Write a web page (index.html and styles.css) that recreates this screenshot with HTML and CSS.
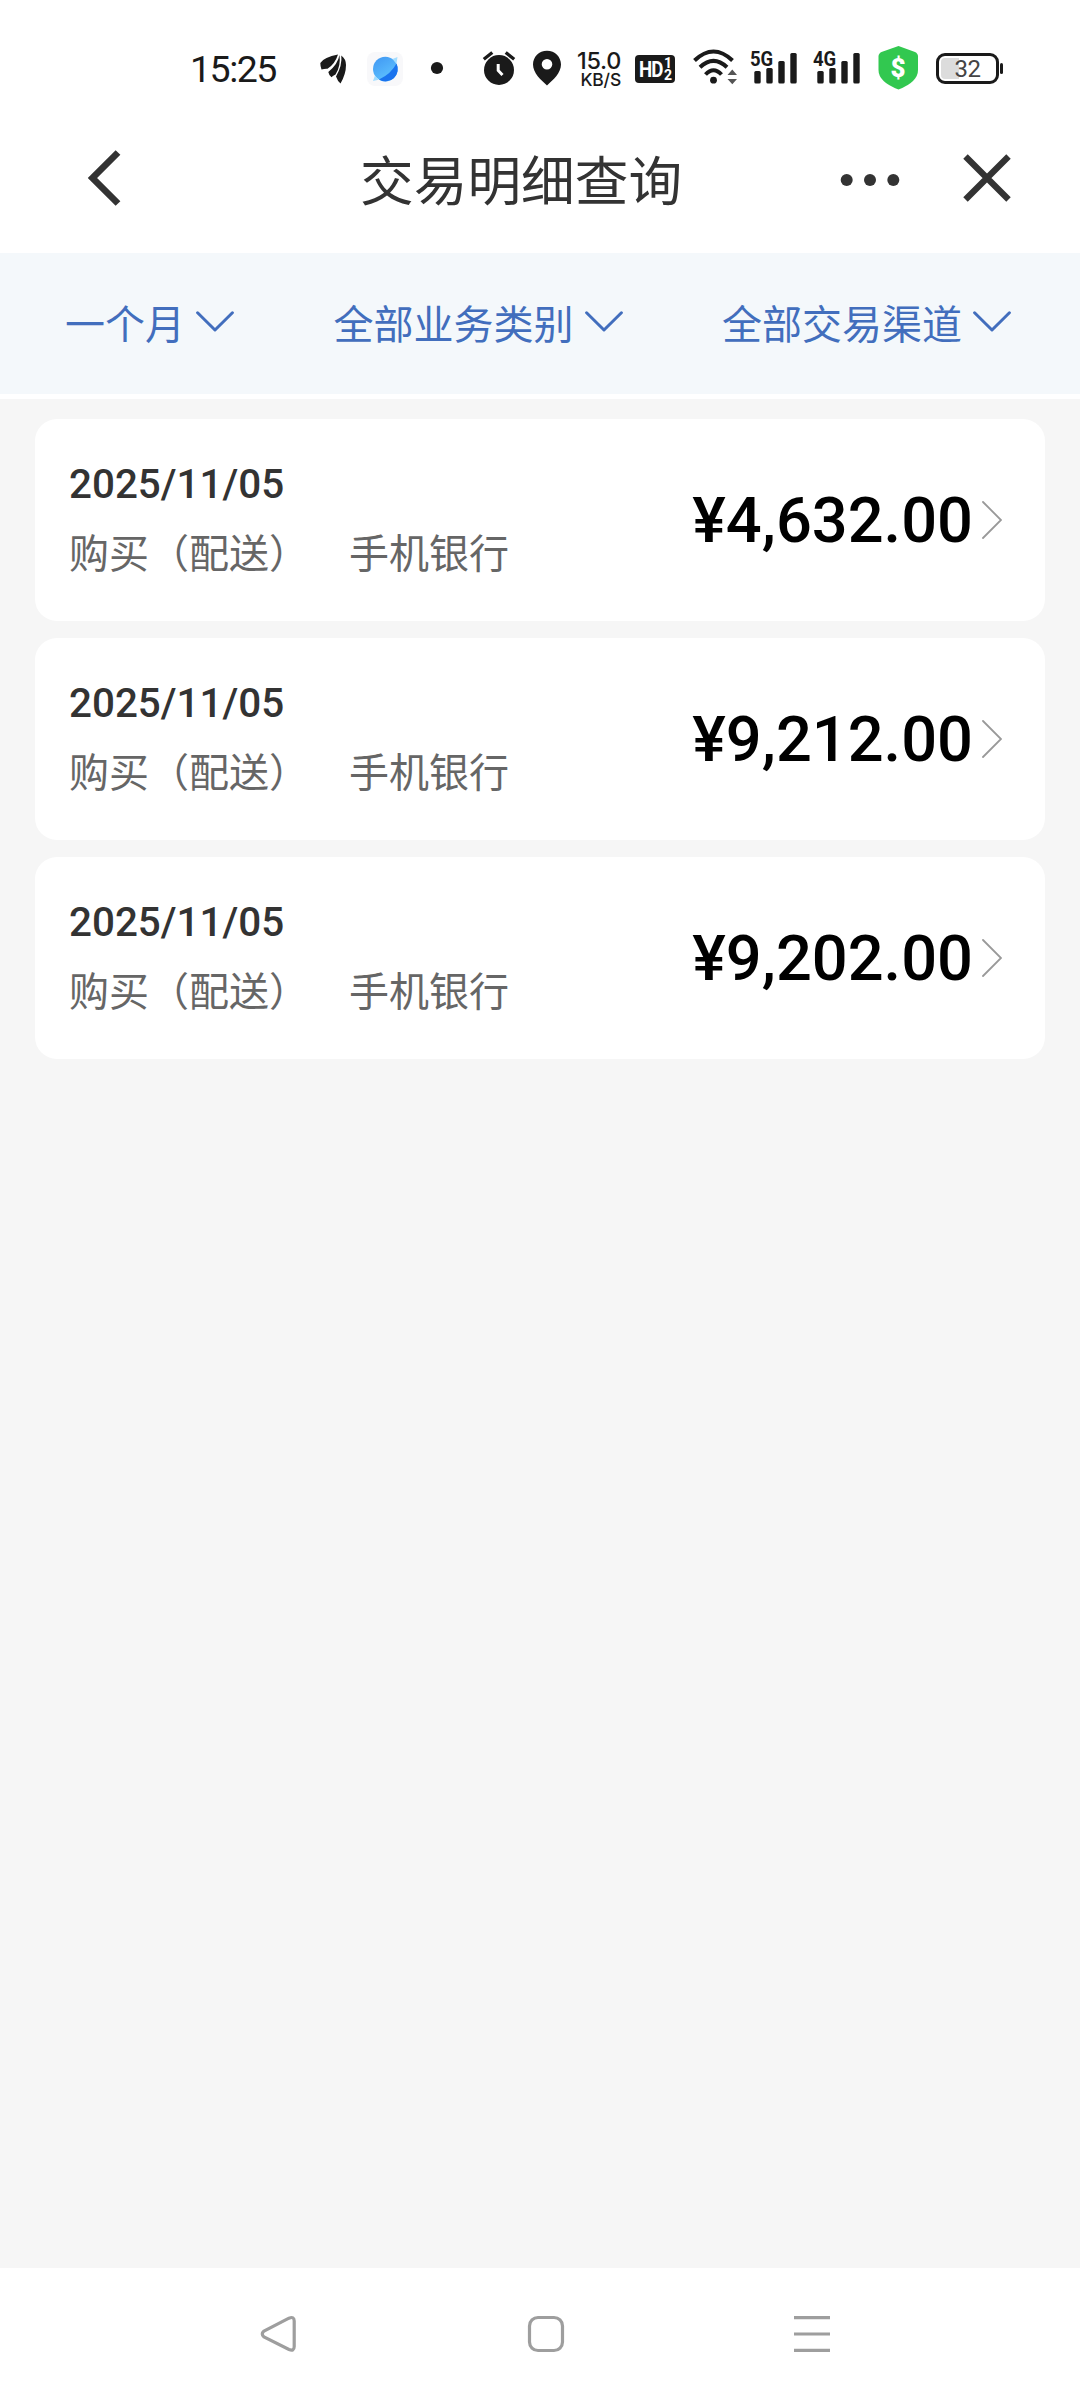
FILE: index.html
```html
<!DOCTYPE html>
<html lang="zh-CN">
<head>
<meta charset="utf-8">
<title>交易明细查询</title>
<link rel="stylesheet" href="styles.css">
</head>
<body>
<div class="screen">
  <div class="status">
    <span class="time">15:25</span>
    <svg class="feather" width="32" height="48" viewBox="318 44 32 48" fill="#1a1a1a"><path d="M338 54.500Q324 57 320.300 63Q320.300 66.500 321.500 69.500Q325 68.500 327.500 68.800Q335 64 338 54.500Z"/><path d="M339.500 55Q338 64 328.300 72Q329 75.500 331.500 77.200Q333 75.500 335.500 74.500Q341 66 339.500 55Z"/><path d="M341.300 55.500Q342.500 65 336 76.500Q337.500 81 340.500 83.500Q346 74 346 65Q346 59 341.300 55.500Z"/></svg>
    <svg class="planet" width="38" height="48" viewBox="366 44 38 48"><defs><linearGradient id="sky" x1="0" y1="0" x2="0.600" y2="1"><stop offset="0" stop-color="#3f96f2"/><stop offset="1" stop-color="#5fc3ff"/></linearGradient></defs><rect x="367" y="52" width="36" height="34" rx="8" fill="#f8f8fa"/><circle cx="385.300" cy="69" r="12.300" fill="url(#sky)"/><path d="M396.500 63.500A12.300 12.300 0 0 1 379 79.500Q391 74 396.500 63.500Z" fill="#1a73ee"/><path d="M392.500 59L397.500 57L396.500 63.500L395 62ZM375 75.500L378.500 79.700L373 81Z" fill="#a5deff"/></svg>
    <svg class="dot" width="14" height="48" viewBox="430 44 14 48"><circle cx="437" cy="68" r="6.100" fill="#1a1a1a"/></svg>
    <svg class="alarm" width="34" height="48" viewBox="482 44 34 48"><circle cx="499" cy="70" r="15" fill="#1a1a1a"/><path d="M483.800 59.300L492.300 52.500M514.200 59.300L505.700 52.500" stroke="#1a1a1a" stroke-width="3.300"/><path d="M498.200 64V70.500L502.500 75" fill="none" stroke="#fff" stroke-width="3"/></svg>
    <svg class="pin" width="30" height="48" viewBox="532 44 30 48"><path fill="#1a1a1a" fill-rule="evenodd" d="M547 50.800C539 50.800 533 57 533 64.500C533 73 541 80 547 85.500C553 80 561 73 561 64.500C561 57 555 50.800 547 50.800ZM547 59A5.300 5.300 0 1 1 547 69.600A5.300 5.300 0 1 1 547 59Z"/></svg>
    <div class="speed"><span class="rate">15.0</span><span class="unit">KB/S</span></div>
    <div class="hd"><span class="hd-text">HD</span><span class="hd-num"><i>1</i><i>2</i></span></div>
    <svg class="wifi" width="46" height="48" viewBox="692 44 46 48"><g fill="none" stroke="#1a1a1a" stroke-width="4"><path d="M694.500 60.500Q713.500 42.500 732.500 60.500"/><path d="M700 67.200Q713.500 54.500 727 67.200"/><path d="M705.500 74.500Q713.500 66 721.500 74.500"/></g><circle cx="713.500" cy="80.200" r="3.400" fill="#1a1a1a"/><path d="M727.500 75L732.300 69.500L737 75ZM727.500 79L732.300 84.300L737 79Z" fill="#555"/></svg>
    <div class="signal"><span class="net">5G</span><svg width="48" height="48" viewBox="750 44 48 48" fill="#1a1a1a"><rect x="754.300" y="71" width="6.400" height="12.500" rx="1.500"/><rect x="766.300" y="68" width="6.400" height="15.500" rx="1.500"/><rect x="778.300" y="61" width="6.400" height="22.500" rx="1.500"/><rect x="790.300" y="53" width="6.400" height="30.500" rx="1.500"/></svg></div>
    <div class="signal second"><span class="net">4G</span><svg width="48" height="48" viewBox="750 44 48 48" fill="#1a1a1a"><rect x="754.300" y="71" width="6.400" height="12.500" rx="1.500"/><rect x="766.300" y="68" width="6.400" height="15.500" rx="1.500"/><rect x="778.300" y="61" width="6.400" height="22.500" rx="1.500"/><rect x="790.300" y="53" width="6.400" height="30.500" rx="1.500"/></svg></div>
    <div class="shield"><svg width="42" height="48" viewBox="877 44 42 48"><path d="M898.500 46L915 52Q918 53.500 918 56.500V70Q918 82 898.500 89.500Q878.500 82 878.500 70V56.500Q878.500 53.500 881.500 52Z" fill="#32c850"/></svg><span class="dollar">$</span></div>
    <div class="battery"><span class="charge"></span><span class="level">32</span></div><span class="tip"></span>
  </div>

  <header class="titlebar">
    <svg class="back" width="40" height="64" viewBox="84 146 40 64"><path d="M118 152.500L92.500 178L118 203.500" fill="none" stroke="#333" stroke-width="6.700"/></svg>
    <h1>交易明细查询</h1>
    <svg class="more" width="64" height="64" viewBox="838 148 64 64" fill="#333"><circle cx="846.700" cy="180" r="6"/><circle cx="870" cy="180" r="6"/><circle cx="893.300" cy="180" r="6"/></svg>
    <svg class="close" width="52" height="64" viewBox="961 146 52 64"><path d="M965.500 156.500L1008.500 199.500M1008.500 156.500L965.500 199.500" stroke="#333" stroke-width="6.300"/></svg>
  </header>

  <nav class="filters">
    <span class="filter"><span>一个月</span><svg width="38" height="22" viewBox="0 0 38 22"><path d="M1.600 1.800L19 19L36.400 1.800"/></svg></span>
    <span class="filter"><span>全部业务类别</span><svg width="38" height="22" viewBox="0 0 38 22"><path d="M1.600 1.800L19 19L36.400 1.800"/></svg></span>
    <span class="filter"><span>全部交易渠道</span><svg width="38" height="22" viewBox="0 0 38 22"><path d="M1.600 1.800L19 19L36.400 1.800"/></svg></span>
  </nav>

  <main class="list">
    <article class="card">
      <div class="info"><div class="date">2025/11/05</div><div class="desc"><span>购买（配送）</span><span>手机银行</span></div></div>
      <div class="amount">¥4,632.00</div>
      <svg class="go" width="20" height="40" viewBox="0 0 20 40"><path d="M1 2L19 20L1 38"/></svg>
    </article>
    <article class="card">
      <div class="info"><div class="date">2025/11/05</div><div class="desc"><span>购买（配送）</span><span>手机银行</span></div></div>
      <div class="amount">¥9,212.00</div>
      <svg class="go" width="20" height="40" viewBox="0 0 20 40"><path d="M1 2L19 20L1 38"/></svg>
    </article>
    <article class="card">
      <div class="info"><div class="date">2025/11/05</div><div class="desc"><span>购买（配送）</span><span>手机银行</span></div></div>
      <div class="amount">¥9,202.00</div>
      <svg class="go" width="20" height="40" viewBox="0 0 20 40"><path d="M1 2L19 20L1 38"/></svg>
    </article>
  </main>

  <footer class="navbar">
    <svg width="36" height="38" viewBox="259.500 2315 36 38"><path d="M288.500 2318.200L263.500 2331Q260 2334 263.500 2337L288.500 2349.500Q293.700 2351.500 293.700 2346.500V2321Q293.700 2316 288.500 2318.200Z"/></svg>
    <svg class="home" width="38" height="38" viewBox="527 2315 38 38"><rect x="529.500" y="2317.500" width="33" height="33" rx="8.500"/></svg>
    <svg class="menu" width="38" height="38" viewBox="793 2315 38 38"><path d="M794 2317.600H830M794 2334H830M794 2350.300H830"/></svg>
  </footer>
</div>
</body>
</html>
```
FILE: styles.css
```css
* { box-sizing: border-box; }
body { margin: 0; font-family: Roboto, "Noto Sans CJK SC", sans-serif; color: #333; }
svg { display: block; flex: none; }
.screen { width: 1080px; height: 2400px; display: flex; flex-direction: column; background: #f6f6f6; }

.status { height: 112px; padding: 44px 0 0 190px; display: flex; align-items: flex-start; background: #fff; color: #1a1a1a; }
.status > * { flex: none; }
.time { width: 128px; height: 48px; font-size: 37.500px; line-height: 51px; letter-spacing: -1.500px; }
.planet { margin-left: 16px; }
.dot { margin-left: 26px; }
.alarm { margin-left: 38px; }
.pin { margin-left: 16px; }
.speed { margin-left: 11px; width: 52px; height: 48px; display: flex; flex-direction: column; align-items: flex-end; padding: 7px 4px 0 0; white-space: nowrap; font-family: Inter, Roboto, sans-serif; font-weight: 500; }
.rate { font-size: 23.400px; line-height: 19px; letter-spacing: -0.300px; }
.unit { font-size: 17.500px; line-height: 16px; margin-top: 2px; letter-spacing: -0.200px; }
.hd { margin: 11px 0 0 10px; width: 40px; height: 28px; border-radius: 4px; background: #1a1a1a; color: #fff; display: flex; padding-left: 4px; }
.hd-text { width: 25px; font-size: 22px; font-weight: 700; line-height: 29px; letter-spacing: -1px; transform: scaleX(0.850); transform-origin: left; }
.hd-num { display: flex; flex-direction: column; padding-top: 2px; font-size: 14px; font-weight: 700; line-height: 12px; }
.hd-num i { font-style: normal; }
.wifi { margin-left: 17px; }
.signal { position: relative; margin-left: 12px; }
.signal.second { margin-left: 15px; }
.net { position: absolute; left: 0; top: 5px; font-size: 21px; font-weight: 700; line-height: 20px; transform: scaleX(0.880); transform-origin: left; }
.shield { margin-left: 16px; position: relative; }
.dollar { position: absolute; left: 0; top: 0; width: 42px; text-align: center; font-size: 26px; line-height: 48px; font-weight: 900; color: #fff; }
.battery { margin: 9px 0 0 17px; width: 63px; height: 31px; border: 3px solid #1a1a1a; border-radius: 9px; position: relative; text-align: center; }
.charge { position: absolute; left: 2px; top: 2px; width: 18px; height: 21px; border-radius: 4px 0 0 4px; background: #dcdcdc; }
.level { position: relative; font-size: 24px; line-height: 26px; display: block; color: #444; letter-spacing: -0.500px; }
.tip { width: 3px; height: 11px; margin: 19px 0 0 1px; border-radius: 2px; background: #1a1a1a; }

.titlebar { height: 141px; display: flex; align-items: flex-start; padding: 34px 0 0 84px; background: #fff; }
.titlebar h1 { margin: 2px 0 0 236px; width: 326px; font-size: 53.700px; line-height: 70px; font-weight: 400; white-space: nowrap; }
.more { margin: 2px 0 0 152px; }
.close { margin-left: 59px; }

.filters { height: 146px; flex: none; display: flex; justify-content: space-between; padding: 0 69px 0 65px; background: #f4f8fb; border-bottom: 5px solid #fff; }
.filter { display: flex; align-items: center; height: 141px; color: #426ebd; font-size: 40px; line-height: 60px; white-space: nowrap; }
.filter span { padding-top: 4px; }
.filter svg { margin: -4px 0 0 11px; fill: none; stroke: #426ebd; stroke-width: 3; stroke-linecap: round; stroke-linejoin: round; }

.list { flex: 1; padding: 20px 35px 0; display: flex; flex-direction: column; gap: 17px; }
.card { height: 202px; flex: none; display: flex; align-items: center; padding: 0 43px 0 34px; border-radius: 22px; background: #fff; }
.info { flex: 1; }
.date { font-size: 40.400px; font-weight: 500; line-height: 58px; color: #333; }
.desc { display: flex; gap: 40px; font-size: 40px; line-height: 60px; color: #666; margin-top: 11px; }
.amount { font-size: 63.200px; font-weight: 500; line-height: 80px; color: #000; }
.go { margin-left: 9px; fill: none; stroke: #999; stroke-width: 1.800; stroke-linecap: round; }

.navbar { height: 132px; display: flex; align-items: center; padding-left: 259.500px; background: #fff; }
.navbar svg { fill: none; stroke: #9e9e9e; stroke-width: 3.200; }
.home { margin-left: 231.500px; }
.menu { margin-left: 228px; }
```
